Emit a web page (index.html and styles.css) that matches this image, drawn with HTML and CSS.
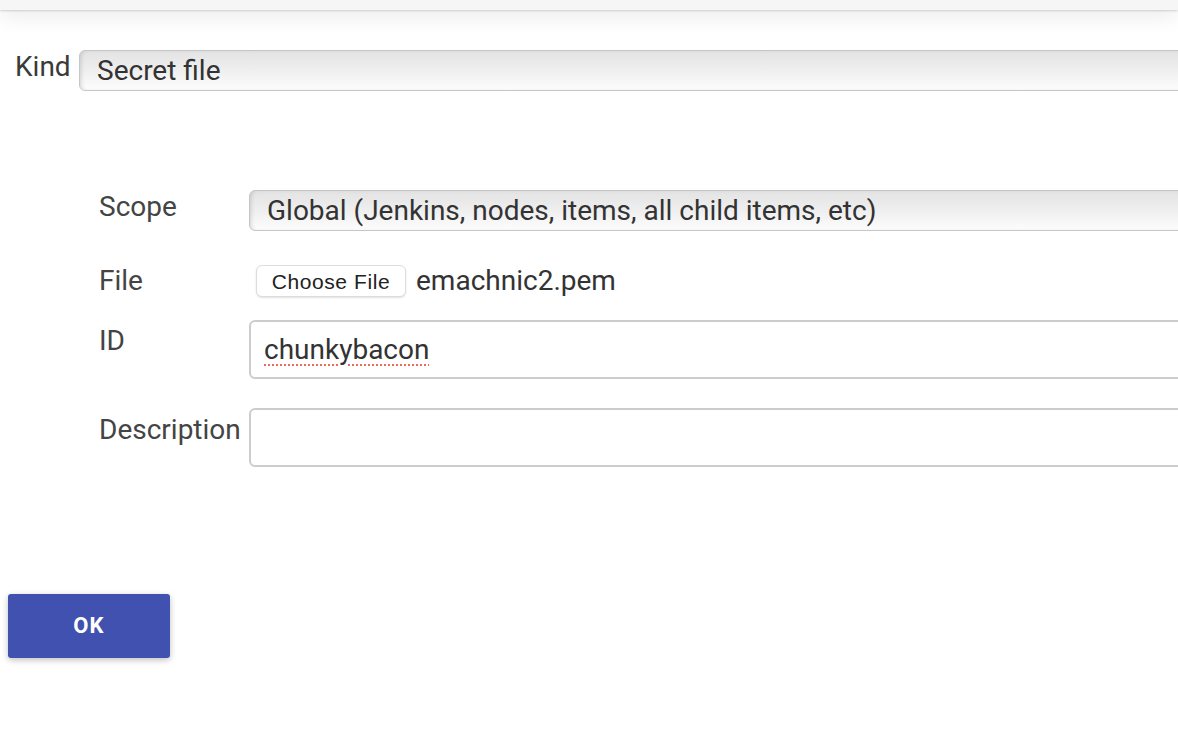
FILE: index.html
```html
<!DOCTYPE html>
<html>
<head>
<meta charset="utf-8">
<link rel="stylesheet" href="styles.css">
</head>
<body>
<div class="topbar"></div>
<div class="page">
  <div class="kind-row">
    <div class="kind-label">Kind</div>
    <div class="select kind-select">Secret file</div>
  </div>

  <div class="fields">
    <div class="row row-scope">
      <div class="label">Scope</div>
      <div class="select">Global (Jenkins, nodes, items, all child items, etc)</div>
    </div>
    <div class="row row-file">
      <div class="label">File</div>
      <div class="file-control">
        <span class="file-btn">Choose File</span>
        <span class="file-name">emachnic2.pem</span>
      </div>
    </div>
    <div class="row row-id">
      <div class="label">ID</div>
      <div class="textbox"><span class="misspelled">chunkybacon</span></div>
    </div>
    <div class="row row-desc">
      <div class="label">Description</div>
      <div class="textbox"></div>
    </div>
  </div>

  <div class="actions">
    <span class="ok-btn">OK</span>
  </div>
</div>
</body>
</html>
```

FILE: styles.css
```css
html, body {
  margin: 0;
  padding: 0;
  overflow: hidden;
  background: #fff;
}

body {
  font-family: Roboto, "Liberation Sans", sans-serif;
  color: #333;
  font-size: 28px;
  width: 1178px;
  height: 736px;
}

.topbar {
  height: 10px;
  background: #f6f6f6;
  box-shadow: 0 1px 2px rgba(0, 0, 0, 0.16), 0 5px 20px rgba(0, 0, 0, 0.12);
  position: relative;
  z-index: 1;
}

.page {
  width: 1240px;
}

.kind-row {
  display: flex;
  align-items: flex-start;
  padding-left: 15px;
  margin-top: 40px;
}

.kind-label {
  width: 64px;
  flex: none;
  padding-top: 1px;
  line-height: 32px;
  color: #3a3a3a;
}

.select {
  flex: 1;
  height: 39px;
  line-height: 39px;
  border: 1px solid #c6c6c6;
  border-radius: 6px;
  background: linear-gradient(#e3e3e3, #f0f0f0 55%, #fdfdfd);
  box-shadow: inset 3px 0 4px -2px rgba(0, 0, 0, 0.15);
  padding-left: 17px;
  color: #333;
  white-space: nowrap;
}

.fields {
  padding-left: 99px;
  margin-top: 99px;
}

.row {
  display: flex;
  align-items: flex-start;
}

.label {
  width: 150px;
  flex: none;
  line-height: 32px;
  color: #444;
}

.row-scope .label {
  padding-top: 1px;
}

.row-file {
  margin-top: 34px;
  height: 32px;
}

.file-control {
  display: flex;
  align-items: center;
  height: 32px;
  padding-left: 7px;
}

.file-btn {
  display: inline-block;
  box-sizing: border-box;
  width: 150px;
  height: 32px;
  line-height: 31px;
  text-align: center;
  font-family: "Liberation Sans", Arial, sans-serif;
  font-size: 21px;
  letter-spacing: 0.6px;
  color: #222;
  background: #fff;
  border: 1px solid #ddd;
  border-radius: 6px;
  box-shadow: 0 1px 2px rgba(0, 0, 0, 0.12);
}

.file-name {
  margin-left: 10px;
  color: #333;
  line-height: 32px;
}

.row-id {
  margin-top: 23px;
}

.row-id .label {
  padding-top: 5px;
}

.row-desc .label {
  padding-top: 6px;
}

.textbox {
  flex: 1;
  box-sizing: border-box;
  height: 59px;
  border: 2px solid #ccc;
  border-radius: 6px;
  background: #fff;
  padding: 12px 0 0 13px;
  line-height: 32px;
  color: #333;
}

.misspelled {
  text-decoration: underline dotted #ea6a60;
  text-decoration-thickness: 2px;
  text-underline-offset: 5px;
}

.row-desc {
  margin-top: 29px;
}

.actions {
  padding-left: 8px;
  margin-top: 127px;
}

.ok-btn {
  display: inline-block;
  width: 162px;
  height: 64px;
  line-height: 64px;
  text-align: center;
  background: #4051b0;
  color: #fff;
  font-weight: 700;
  font-size: 22px;
  letter-spacing: 1.2px;
  border-radius: 3px;
  box-shadow: 0 2px 6px rgba(0, 0, 0, 0.25);
}
```
